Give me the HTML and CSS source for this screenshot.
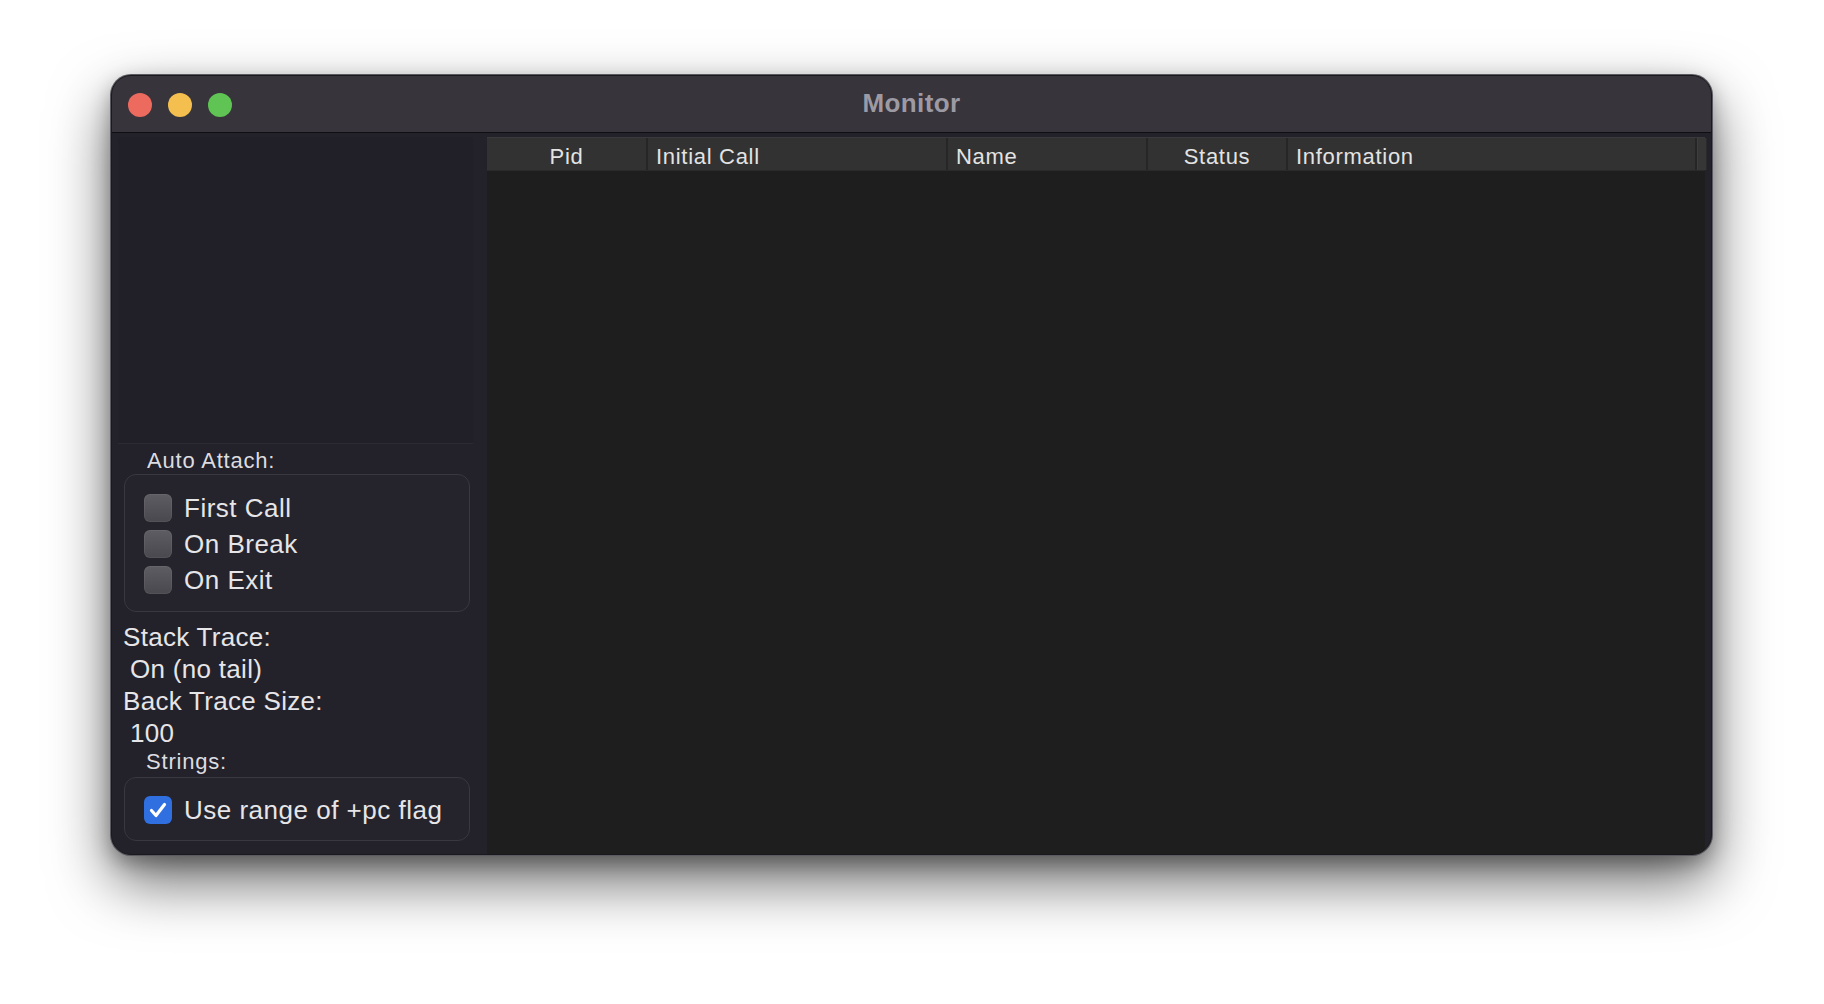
FILE: index.html
```html
<!DOCTYPE html>
<html lang="en">
<head>
<meta charset="utf-8">
<title>Monitor</title>
<link rel="stylesheet" href="styles.css">
</head>
<body>
<div class="window">
  <div class="titlebar">
    <div class="lights">
      <span class="light red"></span>
      <span class="light yellow"></span>
      <span class="light green"></span>
    </div>
    <div class="title">Monitor</div>
    <div class="spacer"></div>
  </div>
  <div class="content">
    <aside class="sidebar">
      <div class="tree"></div>
      <div class="group-label">Auto Attach:</div>
      <div class="group">
        <div class="check"><span class="box"></span><span>First Call</span></div>
        <div class="check"><span class="box"></span><span>On Break</span></div>
        <div class="check"><span class="box"></span><span>On Exit</span></div>
      </div>
      <div class="info">
        <div class="line">Stack Trace:</div>
        <div class="line indent">On (no tail)</div>
        <div class="line">Back Trace Size:</div>
        <div class="line indent">100</div>
      </div>
      <div class="group-label">Strings:</div>
      <div class="group single">
        <div class="check"><span class="box checked"><svg viewBox="0 0 28 28" width="28" height="28"><path d="M7.5 14.5 L12 19.5 L20.5 8.5" fill="none" stroke="#ffffff" stroke-width="3.2" stroke-linecap="round" stroke-linejoin="round"/></svg></span><span>Use range of +pc flag</span></div>
      </div>
    </aside>
    <main class="panel">
      <div class="header">
        <div class="col c-pid center">Pid</div>
        <div class="col c-call">Initial Call</div>
        <div class="col c-name">Name</div>
        <div class="col c-status center">Status</div>
        <div class="col c-info">Information</div>
        <div class="col c-end"></div>
      </div>
    </main>
  </div>
</div>
</body>
</html>
```

FILE: styles.css
```css
* { box-sizing: border-box; }

html, body {
  margin: 0;
  background: #ffffff;
}

body {
  padding: 75px 0 0 111px;
  width: 1824px;
  height: 1004px;
  overflow: hidden;
  font-family: "Liberation Sans", Arial, sans-serif;
}

.window {
  width: 1601px;
  height: 780px;
  border: 1px solid #1a191d;
  border-radius: 20px;
  background: #232129;
  overflow: hidden;
  box-shadow: 0 0 0 1px #5c5a61, 0 26px 60px rgba(0, 0, 0, 0.6), 0 8px 20px rgba(0, 0, 0, 0.3);
  display: flex;
  flex-direction: column;
}

.titlebar {
  height: 57px;
  flex: none;
  background: #37343b;
  border-bottom: 1px solid #0f0e11;
  display: grid;
  grid-template-columns: 1fr auto 1fr;
  align-items: center;
}

.lights {
  display: flex;
  gap: 16px;
  padding-left: 16px;
  padding-top: 2px;
}

.light {
  width: 24px;
  height: 24px;
  border-radius: 50%;
  display: block;
}
.red { background: #ed6a5e; }
.yellow { background: #f5bf4f; }
.green { background: #5fc454; }

.title {
  font-weight: bold;
  font-size: 26px;
  color: #9d9aa3;
  letter-spacing: 0.4px;
  padding-bottom: 2px;
}

.content {
  flex: 1;
  display: flex;
  min-height: 0;
}

.sidebar {
  width: 375px;
  flex: none;
  padding-top: 4px;
  display: flex;
  flex-direction: column;
  color: #e4e3e6;
}

.tree {
  margin-left: 6px;
  width: 355px;
  height: 307px;
  background: #211f27;
  border-bottom: 1px solid #2c2a32;
  flex: none;
}

.group-label {
  margin-top: 4px;
  padding-left: 35px;
  font-size: 22px;
  letter-spacing: 0.8px;
  line-height: 26px;
  height: 26px;
  color: #dddce0;
}

.group {
  margin-left: 12px;
  width: 346px;
  border: 1px solid #393740;
  border-radius: 12px;
  background: #25232b;
  padding: 19px 19px 17px;
  display: flex;
  flex-direction: column;
  gap: 8px;
}

.group.single {
  margin-top: 2px;
  padding: 18px 19px 16px;
}

.check {
  display: flex;
  align-items: center;
  gap: 12px;
  height: 28px;
  font-size: 26px;
  letter-spacing: 0.5px;
  line-height: 28px;
  color: #e6e5e8;
  white-space: nowrap;
}

.box {
  width: 28px;
  height: 28px;
  flex: none;
  border-radius: 6px;
  background: linear-gradient(#5f5d64, #4a484f);
  box-shadow: inset 0 0 0 1px rgba(255, 255, 255, 0.06);
  display: block;
}

.box.checked {
  background: #2f6fe0;
  box-shadow: none;
}

.box svg { display: block; }

.info {
  margin-top: 9px;
  padding-left: 11px;
}

.line {
  font-size: 26px;
  letter-spacing: 0.3px;
  line-height: 32px;
  height: 32px;
  color: #e6e5e8;
  white-space: nowrap;
}

.line.indent { padding-left: 7px; }

.info + .group-label {
  margin-top: 0;
  padding-left: 34px;
}

.panel {
  margin-top: 4px;
  width: 1218px;
  flex: none;
  background: #1e1e1e;
}

.header {
  height: 34px;
  display: grid;
  grid-template-columns: 161px 300px 200px 140px 409px 8px;
  background: #323232;
  border-top: 1px solid #3a3a3a;
  border-bottom: 1px solid #2a2a2a;
}

.col {
  font-size: 22px;
  letter-spacing: 0.7px;
  color: #e3e3e3;
  line-height: 32px;
  padding: 3px 0 0 8px;
  border-right: 2px solid #262626;
  white-space: nowrap;
  overflow: hidden;
}

.col.center {
  text-align: center;
  padding-left: 0;
}

.c-end {
  background: #363636;
  border-left: 1px solid #3d3d3d;
  border-right: 1px solid #2a2a2a;
}
```
